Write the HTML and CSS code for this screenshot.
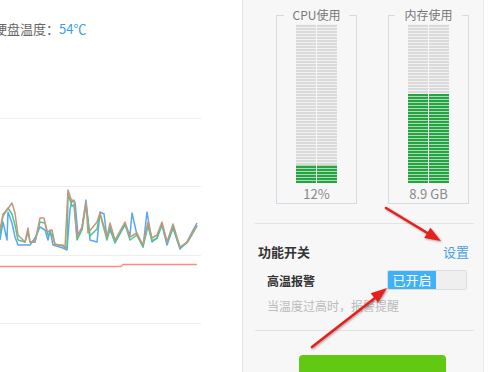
FILE: index.html
```html
<!DOCTYPE html>
<html lang="zh">
<head>
<meta charset="utf-8">
<title>监控</title>
<link rel="stylesheet" href="styles.css">
</head>
<body>
<div class="app">
  <section class="left">
    <div class="temp">硬盘温度：<span class="temp-val">54℃</span></div>
    <svg class="chart" width="201" height="230" viewBox="0 0 201 230">
      <g class="grid">
        <line x1="0" y1="8.5" x2="201" y2="8.5"/>
        <line x1="0" y1="76.5" x2="201" y2="76.5"/>
        <line x1="0" y1="145.5" x2="201" y2="145.5"/>
        <line x1="0" y1="213.5" x2="201" y2="213.5"/>
      </g>
      <polyline class="l-blue" points="0,130 3,112 7,130 8,102 12,113 15,127 18,135 30,135 35,128 40,117 45,120 48,130 50,120 53,135 63,138 67,140 70,100 72,90 75,92 78,125 82,118 86,90 90,130 97,132 100,102 104,104 107,128 110,120 115,132 125,115 130,125 132,103 137,125 143,137 147,102 152,132 157,128 162,115 167,135 173,118 180,139 187,132 192,122 197,113"/>
      <polyline class="l-green" points="0,124 3,106 8,98 12,104 15,115 18,130 25,132 28,122 30,132 35,132 40,112 45,113 48,125 52,124 55,134 63,136 67,138 68,84 72,96 74,95 77,130 82,120 86,95 90,126 97,119 100,104 107,130 110,117 115,133 125,114 130,130 137,125 143,137 148,116 152,131 157,128 162,114 167,133 173,117 180,138 187,133 197,116"/>
      <polyline class="l-brown" points="0,120 3,104 7,100 12,93 15,103 18,125 25,132 28,118 30,132 35,132 40,108 44,108 47,122 52,120 55,135 63,135 65,138 68,80 72,92 74,90 77,127 82,117 86,92 88,123 97,112 100,103 107,127 110,113 115,130 125,112 130,127 137,123 143,135 148,112 152,128 157,125 162,112 167,132 173,114 180,137 187,132 197,115"/>
      <polyline class="l-red" points="0,156.5 121,156.5 123,154.5 197,154.5"/>
    </svg>
  </section>

  <section class="right">
    <div class="gauges">
      <fieldset class="gauge">
        <legend>CPU使用</legend>
        <div class="bar">
          <div class="col"><div class="fill" style="height:18px"></div></div>
          <div class="col"><div class="fill" style="height:18px"></div></div>
        </div>
        <div class="gauge-val">12%</div>
      </fieldset>
      <fieldset class="gauge">
        <legend>内存使用</legend>
        <div class="bar">
          <div class="col"><div class="fill" style="height:89px"></div></div>
          <div class="col"><div class="fill" style="height:89px"></div></div>
        </div>
        <div class="gauge-val">8.9 GB</div>
      </fieldset>
    </div>

    <div class="features">
      <div class="feat-head">
        <span class="feat-title">功能开关</span>
        <a class="feat-link">设置</a>
      </div>
      <div class="feat-row">
        <span class="feat-name">高温报警</span>
        <div class="switch"><span class="switch-on">已开启</span><span class="switch-off"></span></div>
      </div>
      <div class="feat-hint">当温度过高时，报警提醒</div>
    </div>

    <div class="action">
      <button class="btn-green" type="button"></button>
    </div>
  </section>
  <div class="edge"></div>
</div>

<svg class="arrows" width="491" height="372" viewBox="0 0 491 372">
  <line x1="386" y1="208" x2="429" y2="234"/>
  <polygon points="441,241 424.2,237.9 430.4,227.7"/>
  <line x1="312" y1="347" x2="375" y2="298"/>
  <polygon points="387,288 378.1,302.6 370.7,293.2"/>
</svg>
</body>
</html>
```

FILE: styles.css
```css
* { box-sizing: border-box; }
html, body {
  margin: 0;
  padding: 0;
  width: 491px;
  height: 372px;
  overflow: hidden;
  background: #fff;
  font-family: "Noto Sans CJK SC", "Noto Sans", sans-serif;
}
body { position: relative; }

.app {
  display: flex;
  height: 372px;
}

/* left panel */
.left {
  width: 243px;
  flex: none;
  background: #fff;
  border-right: 1px solid #e2e2e2;
  overflow: hidden;
  display: flex;
  flex-direction: column;
}
.temp {
  margin-left: -6px;
  padding-top: 20px;
  height: 38px;
  font-size: 13px;
  line-height: 18px;
  color: #666;
  white-space: nowrap;
}
.temp-val { color: #3a9ee8; }
.chart {
  display: block;
  margin-top: 72px;
}
.grid line { stroke: #eeeeee; stroke-width: 1; }
.chart polyline { fill: none; stroke-width: 1.5; stroke-linejoin: round; }
.l-blue { stroke: #5aa6f2; }
.l-green { stroke: #4cc691; }
.l-brown { stroke: #c4977a; }
.chart .l-red { stroke: #ff8a8a; stroke-width: 1.4; }

/* right panel */
.right {
  width: 241px;
  flex: none;
  background: #f7f7f7;
  border-right: 1px solid #e6e6e6;
}
.edge { flex: 1; background: #fff; }

.gauges {
  display: flex;
  gap: 31px;
  padding-left: 33px;
  padding-top: 7px;
}
.gauge {
  width: 81px;
  margin: 0;
  padding: 0;
  min-width: 0;
  border: 1px solid #d6dbe5;
}
.gauge legend {
  margin: 0 auto;
  padding: 0 9px;
  font-size: 12px;
  line-height: 16px;
  color: #777;
}
.bar {
  display: flex;
  gap: 1px;
  width: 41px;
  height: 159px;
  margin: 1px auto 0;
}
.col {
  flex: 1;
  display: flex;
  flex-direction: column;
  justify-content: flex-end;
  background: repeating-linear-gradient(to top, #dadada 0 2px, #f1f1f1 2px 3px);
}
.fill {
  background: repeating-linear-gradient(to top, #26a443 0 2px, #a9dcb4 2px 3px);
}
.gauge-val {
  margin-top: 2px;
  text-align: center;
  font-size: 13px;
  line-height: 18px;
  height: 18px;
  color: #888;
}

.features {
  margin: 19px 9px 0 12px;
  border-top: 1px solid #e3e3e3;
  border-bottom: 1px solid #e3e3e3;
  padding-bottom: 15px;
}
.feat-head {
  display: flex;
  justify-content: space-between;
  align-items: center;
  margin-top: 17px;
  padding: 0 5px 0 3px;
  height: 20px;
}
.feat-title {
  font-size: 13px;
  font-weight: bold;
  color: #333;
}
.feat-link {
  font-size: 13px;
  color: #4a9fe2;
}
.feat-row {
  display: flex;
  justify-content: space-between;
  align-items: center;
  margin-top: 9px;
  padding: 0 7px 0 12px;
  height: 20px;
}
.feat-name {
  font-size: 12px;
  font-weight: bold;
  color: #333;
}
.switch {
  display: flex;
  width: 80px;
  height: 20px;
  border: 1px solid #dcdcdc;
  border-radius: 2px;
  overflow: hidden;
}
.switch-on {
  width: 48px;
  background: #3fb1f7;
  color: #fff;
  font-size: 13px;
  line-height: 18px;
  text-align: center;
}
.switch-off {
  flex: 1;
  background: #efefef;
}
.feat-hint {
  margin-top: 7px;
  padding-left: 12px;
  font-size: 12px;
  line-height: 18px;
  color: #bbbbbb;
}

.action {
  padding-left: 56px;
  padding-top: 24px;
}
.btn-green {
  display: block;
  width: 147px;
  height: 30px;
  border: none;
  border-radius: 4px;
  background: #62c912;
}

/* annotation overlay */
.arrows {
  position: absolute;
  left: 0;
  top: 0;
  pointer-events: none;
  filter: drop-shadow(1px 1px 1px rgba(0,0,0,0.35));
}
.arrows line { stroke: #e8201c; stroke-width: 2.6; stroke-linecap: round; }
.arrows polygon { fill: #e8201c; }
```
